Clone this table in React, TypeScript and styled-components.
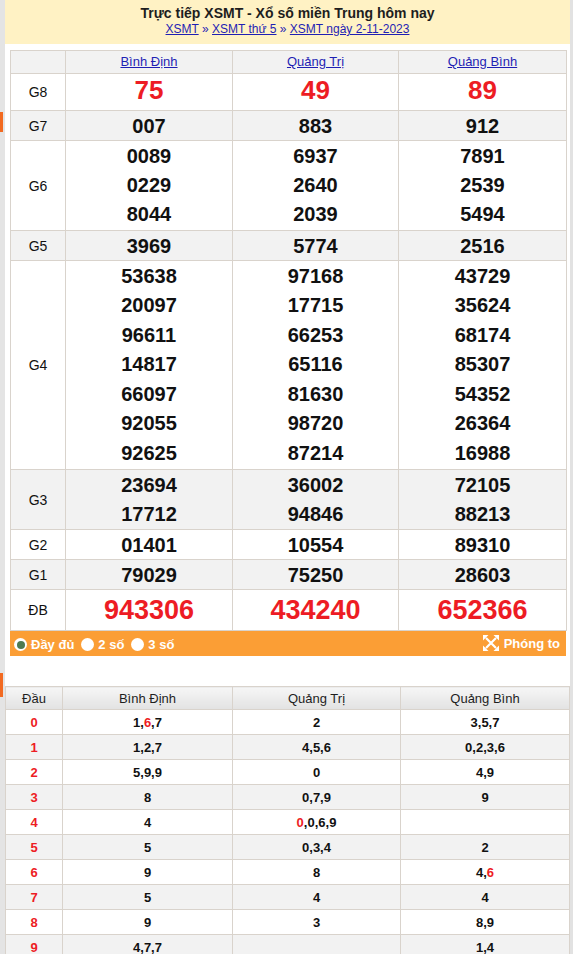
import React from 'react';
import styled, { createGlobalStyle } from 'styled-components';

const Global = createGlobalStyle`
  html, body { margin: 0; padding: 0; background: #fff; }
  body { font-family: "Liberation Sans", Arial, sans-serif; }
  * { box-sizing: border-box; }
`;

const RED = '#ed1c24';
const BORDER = '#d9d3cc';

const Page = styled.div`
  display: flex;
  width: 573px;
  height: 954px;
  overflow: hidden;
`;

const LeftRail = styled.div`
  width: 5px;
  flex-shrink: 0;
  background: #e4e4e4;
  display: flex;
  flex-direction: column;
`;

const RailMark = styled.div<{ $top: number; $h: number }>`
  margin-top: ${(p) => p.$top}px;
  height: ${(p) => p.$h}px;
  width: 3px;
  background: #f26a21;
`;

const Main = styled.div`
  width: 565px;
  flex-shrink: 0;
  background: #fff;
`;

const RightRail = styled.div`
  flex: 1;
  background: #e2e2e2;
`;

const Header = styled.div`
  background: #fff2c4;
  height: 44px;
  padding-top: 4px;
  display: flex;
  flex-direction: column;
  align-items: center;
`;

const Title = styled.h1`
  margin: 0;
  font-size: 14px;
  line-height: 18px;
  font-weight: bold;
  color: #1e1e1e;
`;

const Crumbs = styled.div`
  font-size: 12px;
  line-height: 14px;
  color: #1f1fb4;
`;

const Crumb = styled.a`
  color: #1f1fb4;
  text-decoration: underline;
`;

const ResultBox = styled.div`
  margin: 6px 4px 0 5px;
`;

const Table = styled.table`
  width: 100%;
  border-collapse: collapse;
  table-layout: fixed;
`;

const HeadCell = styled.th`
  height: 23px;
  padding: 0;
  border: 1px solid ${BORDER};
  background: #f2f2f2;
  font-size: 13px;
  line-height: 16px;
  font-weight: normal;
  text-align: center;
`;

const HeadLink = styled.a`
  color: #1f1fb4;
  text-decoration: underline;
`;

const Row = styled.tr<{ $alt: boolean }>`
  background: ${(p) => (p.$alt ? '#f2f2f2' : '#fff')};
`;

const LabelCell = styled.td`
  padding: 0;
  border: 1px solid ${BORDER};
  font-size: 14px;
  line-height: 16px;
  color: #111;
  text-align: center;
`;

const NumCell = styled.td<{ $size: number; $red: boolean; $h: number; $pb: number }>`
  padding: 0 0 ${(p) => p.$pb}px;
  height: ${(p) => p.$h}px;
  border: 1px solid ${BORDER};
  text-align: center;
  font-weight: bold;
  font-size: ${(p) => p.$size}px;
  color: ${(p) => (p.$red ? RED : '#111')};
`;

const NumLine = styled.div<{ $lh: number }>`
  line-height: ${(p) => p.$lh}px;
`;

const OptionBar = styled.div`
  height: 25px;
  background: #fb9e35;
  display: flex;
  align-items: center;
  justify-content: space-between;
  padding: 0 6px 0 4px;
  color: #fff;
  font-size: 13px;
  font-weight: bold;
`;

const Options = styled.div`
  display: flex;
  align-items: center;
  gap: 7px;
  margin-top: 2px;
`;

const Option = styled.label`
  display: flex;
  align-items: center;
  gap: 4px;
`;

const Radio = styled.span<{ $on: boolean }>`
  width: 13px;
  height: 13px;
  border-radius: 50%;
  background: #fff;
  display: flex;
  align-items: center;
  justify-content: center;
  &::after {
    content: '';
    width: 8px;
    height: 8px;
    border-radius: 50%;
    background: ${(p) => (p.$on ? '#4e7a50' : 'transparent')};
  }
`;

const Zoom = styled.div`
  display: flex;
  align-items: center;
  gap: 5px;
  margin-top: -1px;
`;

const LotoBox = styled.div`
  margin: 30px 1px 0 0;
`;

const LotoHead = styled.th`
  height: 23px;
  padding: 0;
  border: 1px solid ${BORDER};
  background: linear-gradient(#f6f6f6, #e2e2e2);
  font-size: 13px;
  font-weight: normal;
  color: #1e1e1e;
  text-align: center;
`;

const LotoCell = styled.td<{ $head?: boolean }>`
  height: 25px;
  padding: 0;
  border: 1px solid ${BORDER};
  text-align: center;
  font-size: 13px;
  font-weight: bold;
  color: ${(p) => (p.$head ? RED : '#111')};
`;

const Hot = styled.span`
  color: ${RED};
`;

const provinces = ['Bình Định', 'Quảng Trị', 'Quảng Bình'];

type Prize = { label: string; vals: string[][]; size: number; red: boolean; h: number; pb: number };

const prizes: Prize[] = [
  { label: 'G8', vals: [['75'], ['49'], ['89']], size: 26, red: true, h: 37, pb: 4 },
  { label: 'G7', vals: [['007'], ['883'], ['912']], size: 20, red: false, h: 30, pb: 0 },
  {
    label: 'G6',
    vals: [
      ['0089', '0229', '8044'],
      ['6937', '2640', '2039'],
      ['7891', '2539', '5494'],
    ],
    size: 20,
    red: false,
    h: 90,
    pb: 0,
  },
  { label: 'G5', vals: [['3969'], ['5774'], ['2516']], size: 20, red: false, h: 30, pb: 0 },
  {
    label: 'G4',
    vals: [
      ['53638', '20097', '96611', '14817', '66097', '92055', '92625'],
      ['97168', '17715', '66253', '65116', '81630', '98720', '87214'],
      ['43729', '35624', '68174', '85307', '54352', '26364', '16988'],
    ],
    size: 20,
    red: false,
    h: 209,
    pb: 0,
  },
  {
    label: 'G3',
    vals: [
      ['23694', '17712'],
      ['36002', '94846'],
      ['72105', '88213'],
    ],
    size: 20,
    red: false,
    h: 60,
    pb: 0,
  },
  { label: 'G2', vals: [['01401'], ['10554'], ['89310']], size: 20, red: false, h: 30, pb: 0 },
  { label: 'G1', vals: [['79029'], ['75250'], ['28603']], size: 20, red: false, h: 30, pb: 0 },
  { label: 'ĐB', vals: [['943306'], ['434240'], ['652366']], size: 27, red: true, h: 41, pb: 0 },
];

type Tail = [string, boolean][];
const loto: Tail[][] = [
  [[['1', false], ['6', true], ['7', false]], [['2', false]], [['3', false], ['5', false], ['7', false]]],
  [[['1', false], ['2', false], ['7', false]], [['4', false], ['5', false], ['6', false]], [['0', false], ['2', false], ['3', false], ['6', false]]],
  [[['5', false], ['9', false], ['9', false]], [['0', false]], [['4', false], ['9', false]]],
  [[['8', false]], [['0', false], ['7', false], ['9', false]], [['9', false]]],
  [[['4', false]], [['0', true], ['0', false], ['6', false], ['9', false]], []],
  [[['5', false]], [['0', false], ['3', false], ['4', false]], [['2', false]]],
  [[['9', false]], [['8', false]], [['4', false], ['6', true]]],
  [[['5', false]], [['4', false]], [['4', false]]],
  [[['9', false]], [['3', false]], [['8', false], ['9', false]]],
  [[['4', false], ['7', false], ['7', false]], [], [['1', false], ['4', false]]],
];

const ExpandIcon = () => (
  <svg width="16" height="16" viewBox="0 0 16 16" fill="#fff">
    <path d="M3 3 L13 13 M13 3 L3 13" stroke="#fff" strokeWidth="2.2" />
    <polygon points="0,0 5.5,0 0,5.5" />
    <polygon points="16,0 10.5,0 16,5.5" />
    <polygon points="0,16 5.5,16 0,10.5" />
    <polygon points="16,16 10.5,16 16,10.5" />
  </svg>
);

export default function App() {
  return (
    <Page>
      <Global />
      <LeftRail>
        <RailMark $top={112} $h={20} />
        <RailMark $top={541} $h={24} />
      </LeftRail>
      <Main>
        <Header>
          <Title>Trực tiếp XSMT - Xổ số miền Trung hôm nay</Title>
          <Crumbs>
            <Crumb>XSMT</Crumb> » <Crumb>XSMT thứ 5</Crumb> » <Crumb>XSMT ngày 2-11-2023</Crumb>
          </Crumbs>
        </Header>

        <ResultBox>
          <Table>
            <colgroup>
              <col style={{ width: 55 }} />
              <col style={{ width: 167 }} />
              <col style={{ width: 166 }} />
              <col style={{ width: 168 }} />
            </colgroup>
            <thead>
              <tr>
                <HeadCell />
                {provinces.map((p) => (
                  <HeadCell key={p}>
                    <HeadLink>{p}</HeadLink>
                  </HeadCell>
                ))}
              </tr>
            </thead>
            <tbody>
              {prizes.map((pr, i) => {
                const n = pr.vals[0].length;
                const lh = Math.floor(((pr.h - 2 - pr.pb) / n) * 10) / 10;
                return (
                  <Row key={pr.label} $alt={i % 2 === 1}>
                    <LabelCell>{pr.label}</LabelCell>
                    {pr.vals.map((col, j) => (
                      <NumCell key={j} $size={pr.size} $red={pr.red} $h={pr.h} $pb={pr.pb}>
                        {col.map((v, k) => (
                          <NumLine key={k} $lh={lh}>
                            {v}
                          </NumLine>
                        ))}
                      </NumCell>
                    ))}
                  </Row>
                );
              })}
            </tbody>
          </Table>
          <OptionBar>
            <Options>
              <Option>
                <Radio $on />
                Đầy đủ
              </Option>
              <Option>
                <Radio $on={false} />
                2 số
              </Option>
              <Option>
                <Radio $on={false} />
                3 số
              </Option>
            </Options>
            <Zoom>
              <ExpandIcon />
              Phóng to
            </Zoom>
          </OptionBar>
        </ResultBox>

        <LotoBox>
          <Table>
            <colgroup>
              <col style={{ width: 57 }} />
              <col style={{ width: 170 }} />
              <col style={{ width: 168 }} />
              <col style={{ width: 169 }} />
            </colgroup>
            <thead>
              <tr>
                <LotoHead>Đầu</LotoHead>
                {provinces.map((p) => (
                  <LotoHead key={p}>{p}</LotoHead>
                ))}
              </tr>
            </thead>
            <tbody>
              {loto.map((row, i) => (
                <Row key={i} $alt={i % 2 === 1}>
                  <LotoCell $head>{i}</LotoCell>
                  {row.map((tails, j) => (
                    <LotoCell key={j}>
                      {tails.map(([d, hot], k) => (
                        <React.Fragment key={k}>
                          {k > 0 && ','}
                          {hot ? <Hot>{d}</Hot> : d}
                        </React.Fragment>
                      ))}
                    </LotoCell>
                  ))}
                </Row>
              ))}
            </tbody>
          </Table>
        </LotoBox>
      </Main>
      <RightRail />
    </Page>
  );
}
